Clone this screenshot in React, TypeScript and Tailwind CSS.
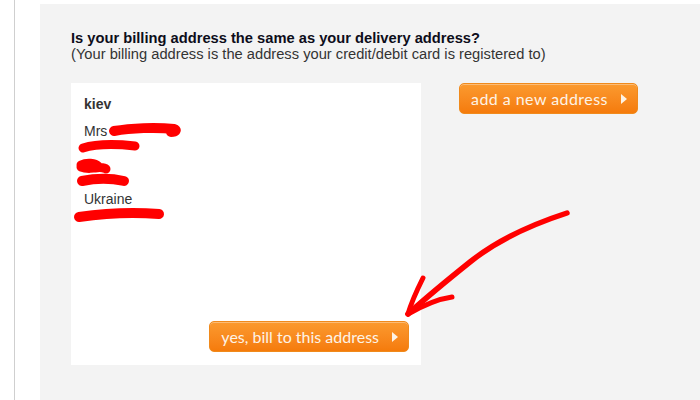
import React from "react";

function Btn({ label, className = "" }: { label: string; className?: string }) {
  return (
    <div
      className={`flex items-center rounded-[5px] border border-[#f08a1c] bg-gradient-to-b from-[#fb9a2e] to-[#f57b0a] text-[#fdf3e6] text-[16px] pl-[11px] pr-[10px] h-[31px] shadow-[inset_0_1px_0_rgba(255,255,255,0.35)] ${className}`}
      style={{ fontFamily: "Lato, 'DejaVu Sans', sans-serif" }}
    >
      <span className="leading-none">{label}</span>
      <svg width="6" height="10" viewBox="0 0 6 10" className="ml-[13px]">
        <path d="M0 0 L6 5 L0 10 Z" fill="#fdf3e6" />
      </svg>
    </div>
  );
}

export default function App() {
  return (
    <div
      className="relative w-[700px] h-[400px] bg-white flex overflow-hidden"
      style={{ fontFamily: "'Liberation Sans', Arial, sans-serif" }}
    >
      <div className="w-[14px]" />
      <div className="w-[1px] bg-[#cfcfcf]" />
      <div className="w-[25px]" />
      <div className="flex-1 mt-[4px] bg-[#f3f3f3] pl-[31px] pt-[26px]">
        <div className="text-[14.7px] leading-[16px]">
          <div className="font-bold text-[#0d0d1a]">Is your billing address the same as your delivery address?</div>
          <div className="text-[#333]">(Your billing address is the address your credit/debit card is registered to)</div>
        </div>
        <div className="flex items-start mt-[21px]">
          <div className="relative w-[350px] h-[282px] bg-white flex flex-col pl-[13px] pt-[13px] pr-[12px] pb-[13px] text-[#333] text-[14px]">
            <div className="font-bold leading-[17px]">kiev</div>
            <div className="mt-[10px] leading-[17px]">
              <div>Mrs</div>
              <div>&nbsp;</div>
              <div>&nbsp;</div>
              <div>&nbsp;</div>
              <div>Ukraine</div>
              <div>&nbsp;</div>
            </div>
            <Btn label="yes, bill to this address" className="mt-auto self-end" />
            <svg className="absolute left-0 top-0" width="350" height="282" viewBox="0 0 350 282">
              <g stroke="#ff0000" strokeLinecap="round" strokeLinejoin="round" fill="none">
                <path d="M43 48 C60 45 85 44 103 46 C106 47 105 49 100 49" strokeWidth="10" />
                <path d="M12 65 C25 61 45 61 64 63" strokeWidth="9" />
                <path d="M10 82 C16 79 24 80 27 83 C24 86 15 86 10 84 M24 85 C30 84 34 85 35 86" strokeWidth="9" />
                <path d="M11 98 C25 95 40 95 53 98" strokeWidth="10" />
                <path d="M8 134 C35 130 65 129 88 131" strokeWidth="10" />
              </g>
            </svg>
          </div>
          <Btn label="add a new address" className="ml-[38px] tracking-[0.45px]" />
        </div>
      </div>
      <svg className="absolute left-0 top-0 pointer-events-none" width="700" height="400" viewBox="0 0 700 400">
        <g stroke="#ff0000" strokeLinecap="round" strokeLinejoin="round" fill="none">
          <path d="M567 213 C530 225 495 242 470 262 C450 278 428 296 408 314" strokeWidth="5.5" />
          <path d="M408 314 C412 300 418 288 423 278" strokeWidth="5" />
          <path d="M408 314 C422 306 438 299 452 297" strokeWidth="5" />
        </g>
      </svg>
    </div>
  );
}
